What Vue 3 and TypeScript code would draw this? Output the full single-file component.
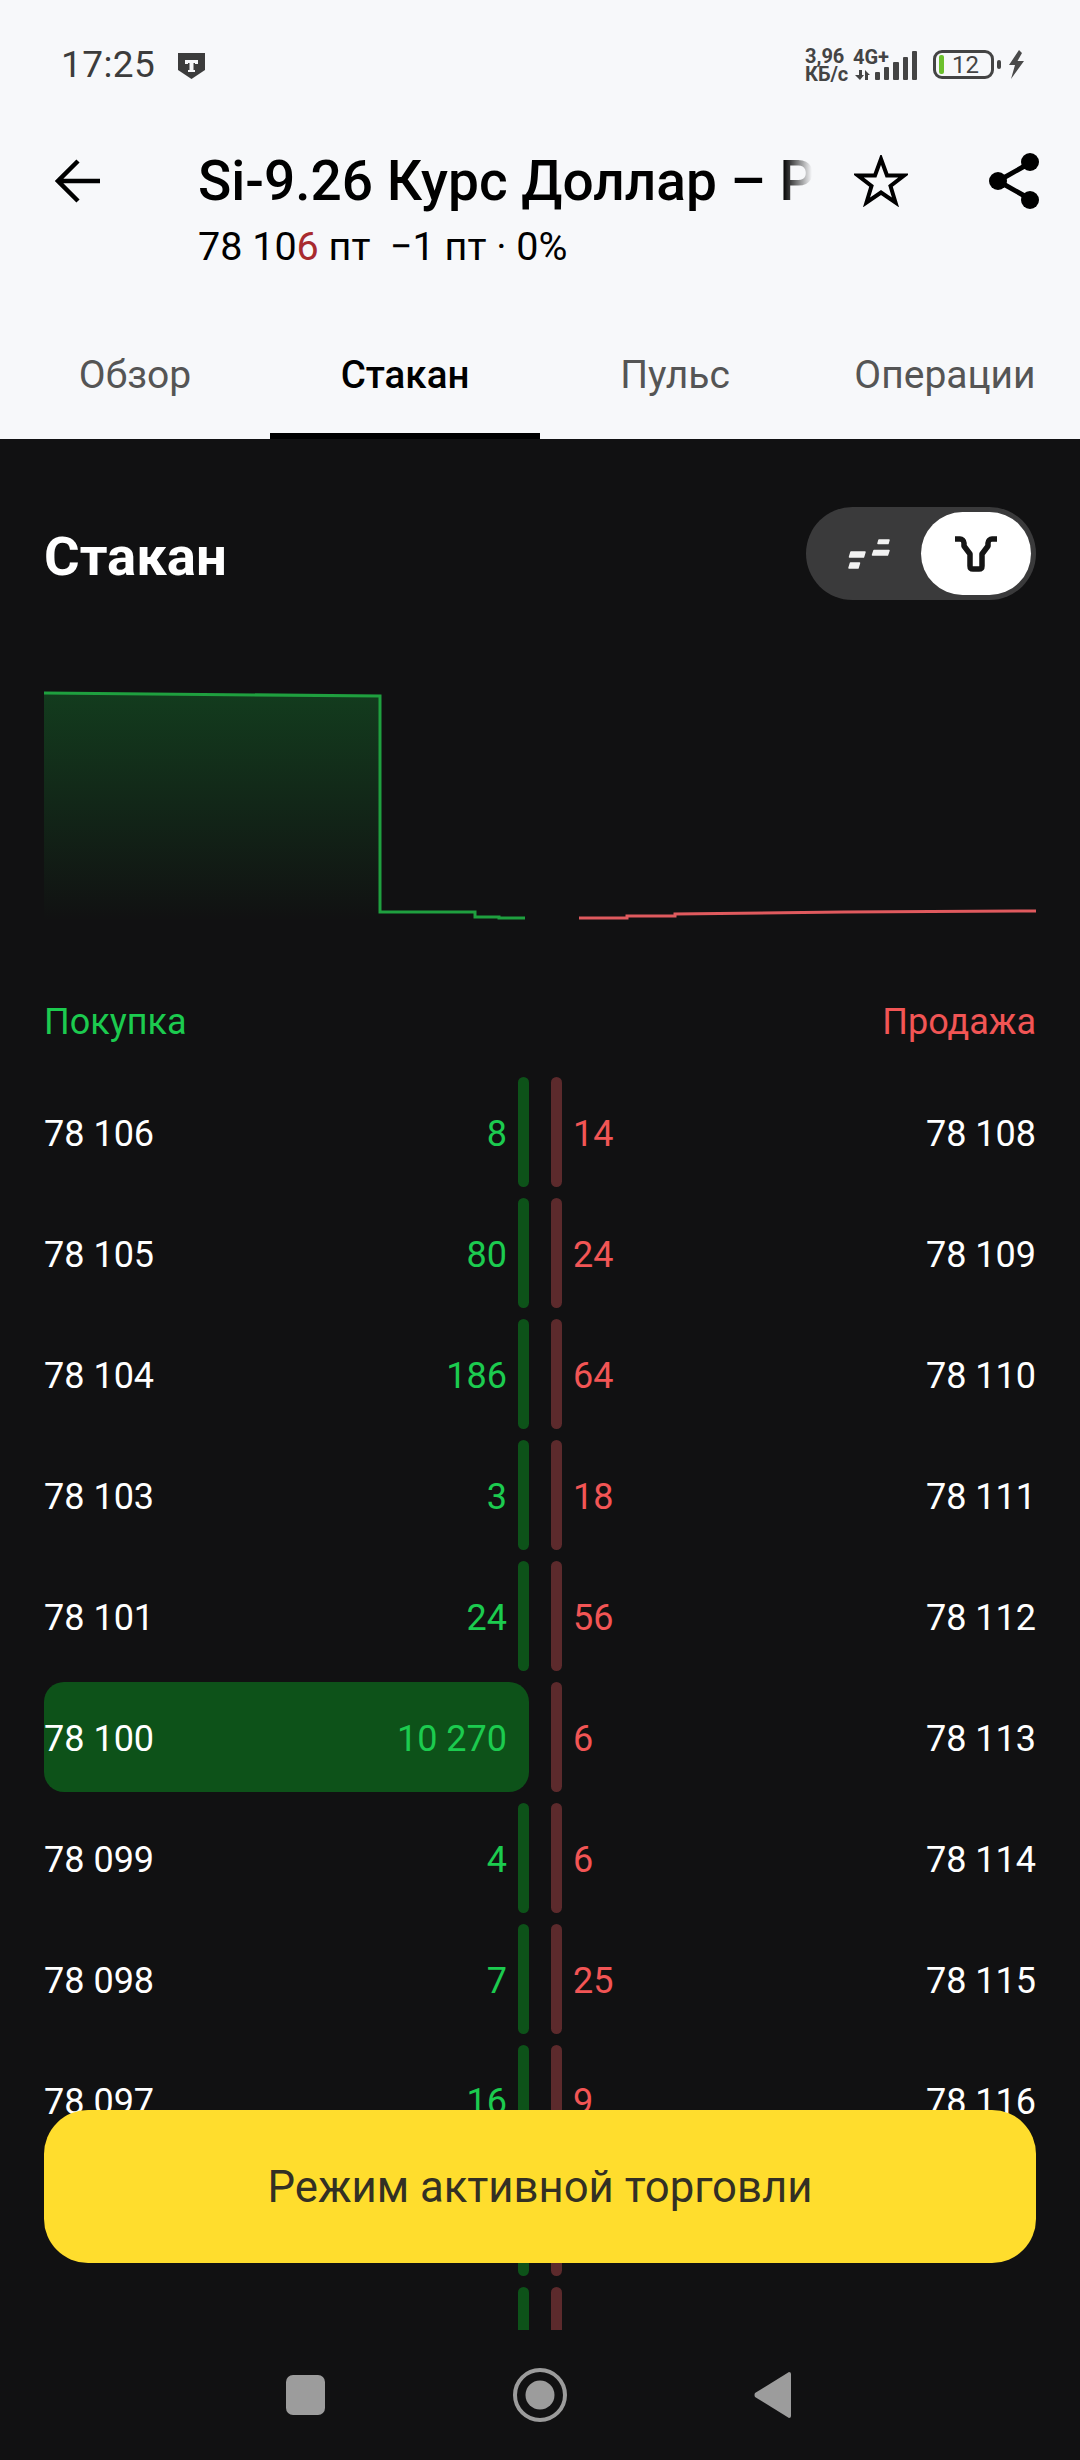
<template>
  <div class="screen">
    <!-- status bar -->
    <div class="status">
      <span class="time">17:25</span>
      <svg class="shield" width="27" height="26" viewBox="0 0 27 26">
        <path d="M0 0H27V17L13.5 26L0 17Z" fill="#3c3c3c" />
        <path d="M7 7H20V11H17V10H15.5V17H17V19H10V17H11.5V10H10V11H7Z" fill="#f7f8fa" />
      </svg>
      <div class="status-right">
        <div class="speed">
          <span>3,96</span>
          <span>КБ/с</span>
        </div>
        <svg class="signal" width="64" height="30" viewBox="0 0 64 30">
          <text x="0" y="14" class="net">4G+</text>
          <path d="M6 20H9V25H11L7 30L2 25H6ZM12 20L17 25H15V30H12Z" fill="#444" />
          <rect x="22" y="22" width="5" height="8" rx="1" fill="#444" />
          <rect x="31" y="17" width="5" height="13" rx="1" fill="#444" />
          <rect x="40" y="12" width="6" height="18" rx="1" fill="#444" />
          <rect x="50" y="7" width="5" height="23" rx="1" fill="#444" />
          <rect x="59" y="1" width="5" height="29" rx="1" fill="#444" />
        </svg>
        <div class="battery">
          <i class="battery-level"></i>
          <span>12</span>
        </div>
        <i class="battery-nub"></i>
        <svg class="bolt" width="17" height="29" viewBox="0 0 17 29">
          <path d="M11 0L1 15H7L3 29L16 11H9.500L14 3Z" fill="#4a4a4a" />
        </svg>
      </div>
    </div>

    <!-- instrument header -->
    <header class="header">
      <div class="titlebar">
        <svg class="back" width="45" height="44" viewBox="0 0 45 44" fill="none">
          <path d="M45 22H3M23 2L3 22L23 42" stroke="#000" stroke-width="4.500" />
        </svg>
        <h1 class="title">Si-9.26 Курс Доллар – Рубль</h1>
        <svg class="star" width="54" height="52" viewBox="0 0 54 52" fill="none">
          <path
            d="M27 4L33 20.500H50L36.500 31L41.500 47.500L27 37.500L12.500 47.500L17.500 31L4 20.500H21Z"
            stroke="#000"
            stroke-width="4"
            stroke-linejoin="miter"
          />
        </svg>
        <svg class="share" width="50" height="56" viewBox="0 0 50 56">
          <path d="M41 10L9 28L41 46" fill="none" stroke="#000" stroke-width="5" />
          <circle cx="41" cy="9" r="9" fill="#000" />
          <circle cx="9" cy="28" r="9" fill="#000" />
          <circle cx="41" cy="47" r="9" fill="#000" />
        </svg>
      </div>
      <div class="quote">78 10<b>6</b> пт&nbsp; −1 пт · 0%</div>
    </header>

    <nav class="tabs">
      <div
        v-for="tab in tabs"
        :key="tab"
        :class="['tab', { 'tab--active': tab === activeTab }]"
      >
        {{ tab }}
      </div>
    </nav>

    <!-- order book -->
    <main class="book">
      <div class="book-head">
        <h2 class="book-title">Стакан</h2>
        <div class="toggle">
          <div class="toggle-off">
            <svg width="42" height="30" viewBox="0 0 42 30">
              <g fill="#f2f2f2" stroke="#f2f2f2" stroke-width="1.500" stroke-linejoin="round">
                <path d="M31 1H41L40 4.500H30Z" />
                <path d="M26 11.500H41L39.500 16H24.500Z" />
                <path d="M3 13H17L15.500 18H1.500Z" />
                <path d="M2.500 24H11.500L10 29H1Z" />
              </g>
            </svg>
          </div>
          <div class="toggle-on">
            <svg width="42" height="36" viewBox="0 0 42 36" fill="none">
              <path
                d="M0 3H5C7 3 9 5 9 7V10L15 18V30Q15 33 18 33H24Q27 33 27 30V18L33 10V7C33 5 35 3 37 3H42"
                stroke="#151515"
                stroke-width="5.500"
                stroke-linejoin="round"
              />
            </svg>
          </div>
        </div>
      </div>

      <svg class="depth" width="992" height="250" viewBox="0 0 992 250">
        <defs>
          <linearGradient id="bidFill" x1="0" y1="0" x2="0" y2="1">
            <stop offset="0" stop-color="#15702c" stop-opacity="0.45" />
            <stop offset="1" stop-color="#15702c" stop-opacity="0" />
          </linearGradient>
        </defs>
        <path d="M0 13L336 16V240H0Z" fill="url(#bidFill)" />
        <path
          d="M0 13L336 16V232H431V237H455V238H481"
          fill="none"
          stroke="#1fa03f"
          stroke-width="3"
        />
        <path
          d="M535 238H583V236H631V234L800 232L992 231"
          fill="none"
          stroke="#e05a5e"
          stroke-width="3"
        />
      </svg>

      <div class="sides">
        <span class="side-buy">Покупка</span>
        <span class="side-sell">Продажа</span>
      </div>

      <div class="rows">
        <div v-for="(row, i) in rows" :key="i" class="row">
          <div class="half half--bid">
            <i class="bar bar--bid" :style="{ width: barWidth(row.bidQty) }"></i>
            <span class="price">{{ row.bid }}</span>
            <span class="qty qty--bid">{{ row.bidQty }}</span>
          </div>
          <div class="half half--ask">
            <i class="bar bar--ask"></i>
            <span class="qty qty--ask">{{ row.askQty }}</span>
            <span class="price">{{ row.ask }}</span>
          </div>
        </div>
      </div>

      <button class="trade-btn">Режим активной торговли</button>
    </main>

    <!-- android nav -->
    <div class="navbar">
      <i class="nav-square"></i>
      <svg width="54" height="54" viewBox="0 0 54 54" fill="none">
        <circle cx="27" cy="27" r="25" stroke="#9c9c9c" stroke-width="4" />
        <circle cx="27" cy="27" r="14.500" fill="#9c9c9c" />
      </svg>
      <svg width="37" height="46" viewBox="0 0 37 46">
        <path d="M35 0Q37 0 37 2V44Q37 46 35 46L1 25Q0 23 1 21Z" fill="#9c9c9c" />
      </svg>
    </div>
  </div>
</template>

<script setup lang="ts">
interface Row {
  bid: string;
  bidQty: string;
  ask: string;
  askQty: string;
}

const tabs = ['Обзор', 'Стакан', 'Пульс', 'Операции'];
const activeTab = 'Стакан';

const rows: Row[] = [
  { bid: '78 106', bidQty: '8', ask: '78 108', askQty: '14' },
  { bid: '78 105', bidQty: '80', ask: '78 109', askQty: '24' },
  { bid: '78 104', bidQty: '186', ask: '78 110', askQty: '64' },
  { bid: '78 103', bidQty: '3', ask: '78 111', askQty: '18' },
  { bid: '78 101', bidQty: '24', ask: '78 112', askQty: '56' },
  { bid: '78 100', bidQty: '10 270', ask: '78 113', askQty: '6' },
  { bid: '78 099', bidQty: '4', ask: '78 114', askQty: '6' },
  { bid: '78 098', bidQty: '7', ask: '78 115', askQty: '25' },
  { bid: '78 097', bidQty: '16', ask: '78 116', askQty: '9' },
  // строки под кнопкой и у края: видны только полосы
  { bid: '', bidQty: '', ask: '', askQty: '' },
  { bid: '', bidQty: '', ask: '', askQty: '' }
];

// полоса объёма: всё, что меньше порога, рисуем тонкой
const barWidth = (qty: string) => {
  const n = Number(qty.replace(/\s/g, ''));
  return n > 1000 ? '100%' : '11px';
};
</script>

<style>
html,
body {
  margin: 0;
  background: #111112;
}
</style>

<style scoped>
.screen {
  position: relative;
  width: 1080px;
  height: 2460px;
  display: flex;
  flex-direction: column;
  overflow: hidden;
  background: #f7f8fa;
  font-family: Roboto, "Noto Sans", sans-serif;
}

.status {
  height: 130px;
  flex: none;
  display: flex;
  align-items: center;
  padding: 0 55px 0 61px;
  box-sizing: border-box;
  color: #3c3c3c;
}

.time {
  font-size: 37px;
  line-height: 40px;
  letter-spacing: 0.4px;
}

.shield {
  margin-left: 23px;
  margin-top: 2px;
}

.status-right {
  margin-left: auto;
  display: flex;
  align-items: center;
  margin-top: -1px;
}

.speed {
  display: flex;
  flex-direction: column;
  width: 48px;
  font-size: 20px;
  font-weight: 700;
  line-height: 18px;
  color: #444;
}

.net {
  font-size: 20px;
  font-weight: 700;
  fill: #444;
}

.signal {
  margin-right: 16px;
  overflow: visible;
}

.battery {
  width: 61px;
  height: 29px;
  box-sizing: border-box;
  border: 3px solid #444;
  border-radius: 9px;
  display: flex;
  align-items: center;
  padding-left: 3px;
  font-size: 24px;
  color: #444;
}

.battery-level {
  width: 5px;
  height: 19px;
  border-radius: 2px;
  background: #6cc02c;
  margin-right: 8px;
}

.battery-nub {
  width: 4px;
  height: 9px;
  margin-left: 3px;
  border-radius: 2px;
  background: #444;
}

.bolt {
  margin-left: 7px;
}

.header {
  height: 170px;
  flex: none;
  padding-top: 19px;
  box-sizing: border-box;
}

.titlebar {
  display: flex;
  align-items: center;
  height: 64px;
  padding-left: 55px;
}

.back {
  flex: none;
  margin-right: 98px;
}

.title {
  width: 614px;
  flex: none;
  margin: 0;
  font-size: 55px;
  font-weight: 500;
  line-height: 64px;
  color: #000;
  white-space: nowrap;
  overflow: hidden;
  -webkit-mask-image: linear-gradient(90deg, #000 585px, transparent 614px);
  mask-image: linear-gradient(90deg, #000 585px, transparent 614px);
}

.star {
  flex: none;
  margin-left: 42px;
}

.share {
  flex: none;
  margin-left: 81px;
}

.quote {
  margin-top: 9px;
  padding-left: 198px;
  font-size: 39.5px;
  line-height: 50px;
  color: #000;
}

.quote b {
  font-weight: 400;
  color: #a82a2e;
}

.tabs {
  height: 139px;
  flex: none;
  display: grid;
  grid-template-columns: repeat(4, 1fr);
}

.tab {
  box-sizing: border-box;
  padding-top: 50px;
  border-bottom: 6px solid transparent;
  text-align: center;
  font-size: 39px;
  line-height: 50px;
  color: #555;
}

.tab--active {
  color: #000;
  font-weight: 500;
  font-size: 38.5px;
  border-bottom-color: #000;
}

.book {
  position: relative;
  flex: 1;
  min-height: 0;
  display: flex;
  flex-direction: column;
  padding: 68px 44px 0;
  background: #111112;
}

.book-head {
  display: flex;
  align-items: center;
  justify-content: space-between;
  height: 93px;
  flex: none;
}

.book-title {
  margin: 0;
  font-size: 54.5px;
  font-weight: 700;
  color: #fff;
  line-height: 60px;
  padding-top: 4px;
}

.toggle {
  width: 230px;
  height: 93px;
  box-sizing: border-box;
  padding: 5px;
  border-radius: 47px;
  background: #3a3a3b;
  display: flex;
}

.toggle-off,
.toggle-on {
  display: flex;
  align-items: center;
  justify-content: center;
}

.toggle-off {
  flex: 1;
  padding-left: 6px;
}

.toggle-on {
  width: 110px;
  height: 83px;
  border-radius: 42px;
  background: #fff;
}

.depth {
  flex: none;
  margin-top: 80px;
}

.sides {
  flex: none;
  display: flex;
  justify-content: space-between;
  margin-top: 67px;
  font-size: 36px;
  line-height: 50px;
}

.side-buy {
  color: #1ccb4f;
}

.side-sell {
  color: #f25555;
}

.rows {
  flex: 1;
  min-height: 0;
  margin-top: 30px;
  display: flex;
  flex-direction: column;
  gap: 11px;
  overflow: hidden;
}

.row {
  flex: none;
  height: 110px;
  display: grid;
  grid-template-columns: 485px 485px;
  column-gap: 22px;
}

.half {
  position: relative;
  display: flex;
  align-items: center;
  justify-content: space-between;
  box-sizing: border-box;
  padding-top: 3px;
  font-size: 36px;
  line-height: 44px;
}

.half--bid {
  padding-right: 22px;
}

.half--ask {
  padding-left: 22px;
}

.price,
.qty {
  position: relative;
}

.price {
  color: #fff;
}

.qty--bid {
  color: #1ccb4f;
}

.qty--ask {
  color: #f25555;
}

.bar {
  position: absolute;
  top: 0;
  bottom: 0;
  width: 11px;
  border-radius: 20px;
}

.bar--bid {
  right: 0;
  background: #0d5219;
}

.bar--ask {
  left: 0;
  background: #5c2a2c;
}

.trade-btn {
  position: absolute;
  left: 44px;
  right: 44px;
  bottom: 67px;
  height: 153px;
  border: none;
  border-radius: 44px;
  background: #ffdd2d;
  color: #333024;
  font-family: inherit;
  font-size: 43.7px;
}

.navbar {
  position: relative;
  height: 130px;
  flex: none;
  background: #111112;
  display: flex;
  align-items: center;
  padding: 0 289px 0 286px;
  justify-content: space-between;
}

.nav-square {
  width: 39px;
  height: 40px;
  border-radius: 7px;
  background: #9c9c9c;
}
</style>
